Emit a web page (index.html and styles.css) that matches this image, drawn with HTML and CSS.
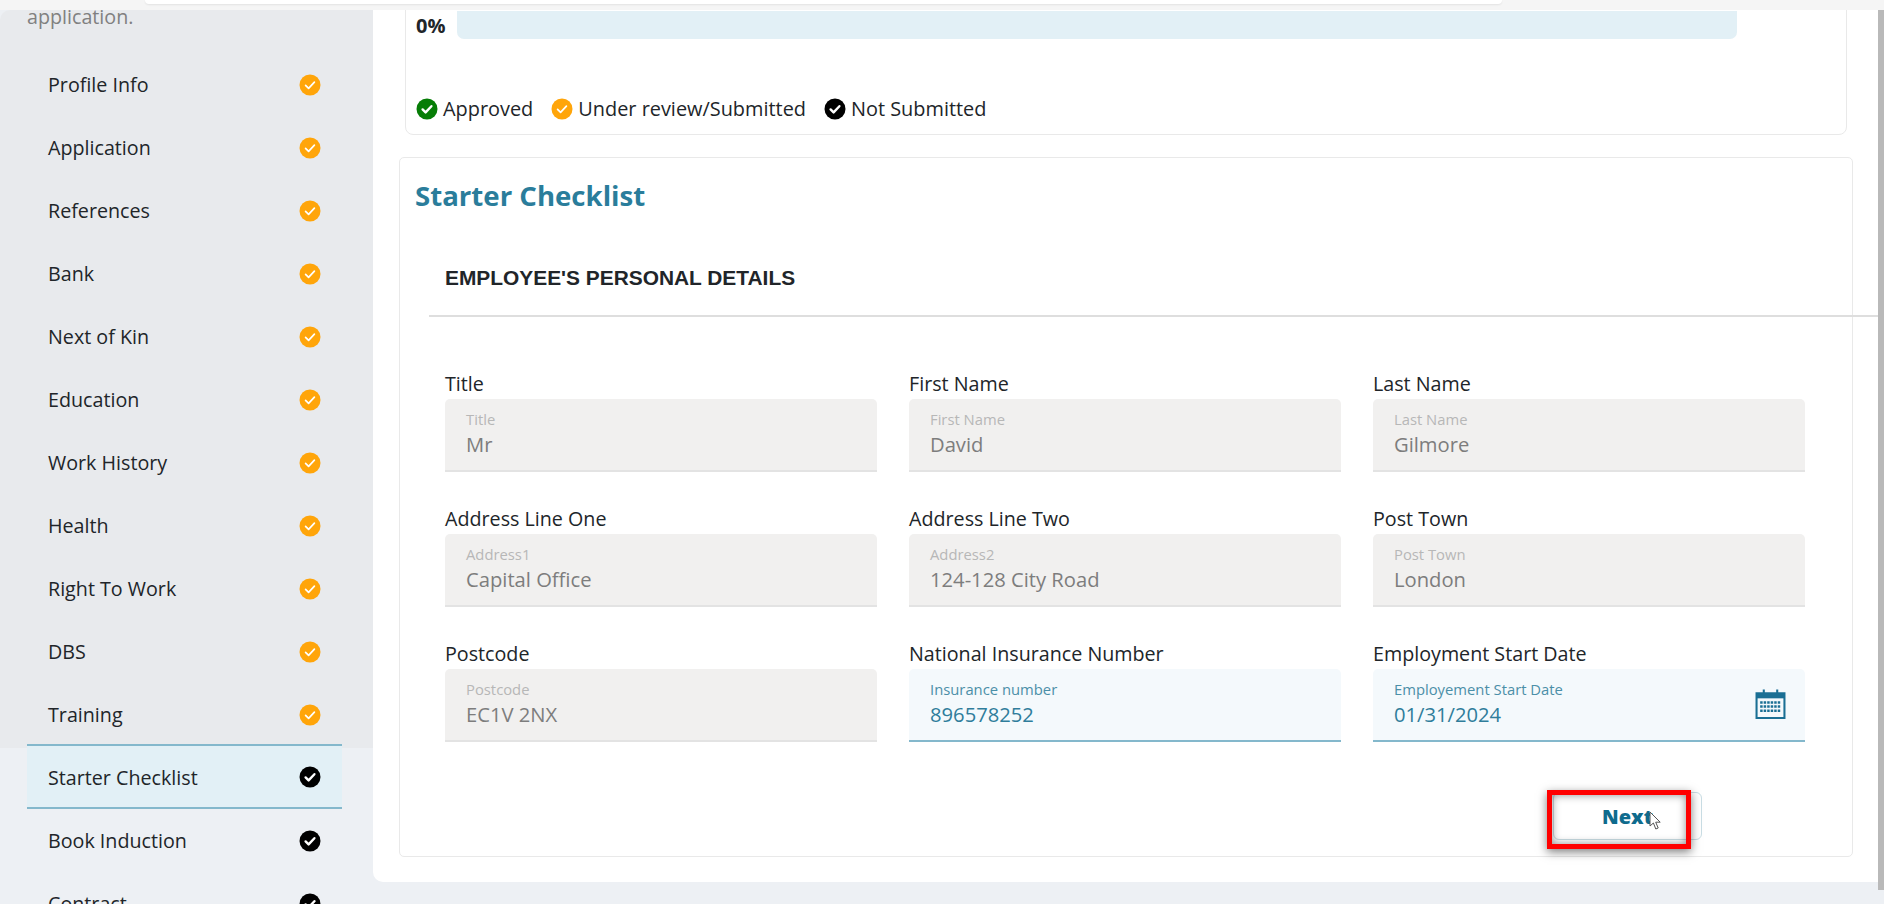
FILE: index.html
```html
<!DOCTYPE html>
<html lang="en">
<head>
    <meta charset="utf-8">
    <title>Starter Checklist</title>
    <link rel="stylesheet" href="styles.css">
</head>
<body>
    <svg class="defs" width="0" height="0">
        <symbol id="tick" viewBox="0 0 22 22">
            <circle cx="11" cy="11" r="10.5" fill="currentColor"/>
            <path d="M6.6 11.4l3 3 5.8-6.2" fill="none" stroke="#fff" stroke-width="1.7" stroke-linecap="round" stroke-linejoin="round"/>
        </symbol>
        <symbol id="tick-bold" viewBox="0 0 22 22">
            <circle cx="11" cy="11" r="10.5" fill="currentColor"/>
            <path d="M6.6 11.4l3 3 5.8-6.2" fill="none" stroke="#fff" stroke-width="2.4" stroke-linecap="round" stroke-linejoin="round"/>
        </symbol>
    </svg>

    <div class="topbar"><div class="topbar-search"></div></div>

    <div class="layout">
        <aside class="sidebar">
            <div class="sidebar-shade"></div>
            <p class="intro">application.</p>
            <ul class="steps">
                <li class="step">Profile Info<svg class="dot orange"><use href="#tick"/></svg></li>
                <li class="step">Application<svg class="dot orange"><use href="#tick"/></svg></li>
                <li class="step">References<svg class="dot orange"><use href="#tick"/></svg></li>
                <li class="step">Bank<svg class="dot orange"><use href="#tick"/></svg></li>
                <li class="step">Next of Kin<svg class="dot orange"><use href="#tick"/></svg></li>
                <li class="step">Education<svg class="dot orange"><use href="#tick"/></svg></li>
                <li class="step">Work History<svg class="dot orange"><use href="#tick"/></svg></li>
                <li class="step">Health<svg class="dot orange"><use href="#tick"/></svg></li>
                <li class="step">Right To Work<svg class="dot orange"><use href="#tick"/></svg></li>
                <li class="step">DBS<svg class="dot orange"><use href="#tick"/></svg></li>
                <li class="step">Training<svg class="dot orange"><use href="#tick"/></svg></li>
                <li class="step active">Starter Checklist<svg class="dot black"><use href="#tick-bold"/></svg></li>
                <li class="step">Book Induction<svg class="dot black"><use href="#tick-bold"/></svg></li>
                <li class="step">Contract<svg class="dot black"><use href="#tick-bold"/></svg></li>
            </ul>
        </aside>

        <main class="panel">
            <section class="progress-card">
                <div class="progress-row">
                    <b class="percent">0%</b>
                    <div class="progress-bar"></div>
                </div>
                <div class="legend">
                    <span class="legend-item"><svg class="dot green"><use href="#tick-bold"/></svg>Approved</span>
                    <span class="legend-item"><svg class="dot orange"><use href="#tick"/></svg>Under review/Submitted</span>
                    <span class="legend-item"><svg class="dot black"><use href="#tick-bold"/></svg>Not Submitted</span>
                </div>
            </section>

            <section class="checklist-card">
                <h2 class="card-title">Starter Checklist</h2>
                <h3 class="form-heading">EMPLOYEE'S PERSONAL DETAILS</h3>
                <div class="form-grid">
                    <div class="field">
                        <label>Title</label>
                        <div class="box"><small>Title</small><span>Mr</span></div>
                    </div>
                    <div class="field">
                        <label>First Name</label>
                        <div class="box"><small>First Name</small><span>David</span></div>
                    </div>
                    <div class="field">
                        <label>Last Name</label>
                        <div class="box"><small>Last Name</small><span>Gilmore</span></div>
                    </div>
                    <div class="field">
                        <label>Address Line One</label>
                        <div class="box"><small>Address1</small><span>Capital Office</span></div>
                    </div>
                    <div class="field">
                        <label>Address Line Two</label>
                        <div class="box"><small>Address2</small><span>124-128 City Road</span></div>
                    </div>
                    <div class="field">
                        <label>Post Town</label>
                        <div class="box"><small>Post Town</small><span>London</span></div>
                    </div>
                    <div class="field">
                        <label>Postcode</label>
                        <div class="box"><small>Postcode</small><span>EC1V 2NX</span></div>
                    </div>
                    <div class="field">
                        <label>National Insurance Number</label>
                        <div class="box editable"><small>Insurance number</small><span>896578252</span></div>
                    </div>
                    <div class="field">
                        <label>Employment Start Date</label>
                        <div class="box editable">
                            <small>Employement Start Date</small><span>01/31/2024</span>
                            <svg class="calendar" viewBox="0 0 30 30">
                                <path d="M1.5 5h27v24h-27z" fill="none" stroke="currentColor" stroke-width="2"/>
                                <path d="M1.5 5h27v5h-27z" fill="currentColor"/>
                                <path d="M8.5 1.5v6M21.5 1.5v6" stroke="currentColor" stroke-width="2"/>
                                <path d="M5 14h20M5 18h20M5 22h20" stroke="currentColor" stroke-width="2.4" stroke-dasharray="2.4 1"/>
                            </svg>
                        </div>
                    </div>
                </div>
                <div class="actions">
                    <button class="next-btn">Next</button>
                    <div class="highlight"></div>
                    <svg class="cursor" viewBox="0 0 12 20">
                        <path d="M1 1v14l3.4-3 2.4 6 2.4-1-2.5-5.8h4.5z" fill="#fff" stroke="#555" stroke-width="1"/>
                    </svg>
                </div>
            </section>
        </main>
    </div>

    <div class="scrollbar"></div>
</body>
</html>
```

FILE: styles.css
```css
html, body {
    height: 100%;
}
body {
    margin: 0;
    height: 904px;
    overflow: hidden;
    position: relative;
    background-color: #edf0f4;
    font-family: "Open Sans", "Noto Sans", sans-serif;
    font-size: 19.7px;
    color: #212529;
}
.defs {
    position: absolute;
}
.topbar {
    height: 10px;
    background: #f5f5f5;
}
.topbar-search {
    margin: 0 382px 0 145px;
    height: 4px;
    background: #fff;
    border-radius: 0 0 14px 14px;
    box-shadow: 0 1px 2px rgba(0, 0, 0, 0.08);
}
.layout {
    display: flex;
    height: 894px;
    overflow: hidden;
}

/* left steps */
.sidebar {
    width: 373px;
    flex: none;
    position: relative;
}
.sidebar-shade {
    position: absolute;
    top: 0;
    left: 0;
    right: 0;
    height: 738px;
    background: #e8eaed;
    border-top-left-radius: 10px;
    z-index: -1;
}
.intro {
    margin: 0 0 0 27px;
    height: 43px;
    line-height: 13px;
    color: #808080;
    overflow: hidden;
}
.steps {
    list-style: none;
    margin: 0 31px 0 27px;
    padding: 0;
}
.step {
    height: 63px;
    box-sizing: border-box;
    padding: 0 21px;
    display: flex;
    align-items: center;
    justify-content: space-between;
}
.step.active {
    margin-top: -2px;
    height: 65px;
    padding-top: 1px;
    background: #e2f0f6;
    border-top: 2px solid #84b8cc;
    border-bottom: 2px solid #84b8cc;
}
.dot {
    width: 22px;
    height: 22px;
    flex: none;
}
.orange { color: #ffa50a; }
.black { color: #000; }
.green { color: #067d06; }

/* right panel */
.panel {
    flex: 1;
    height: 872px;
    background: #fff;
    border-bottom-left-radius: 10px;
    padding: 0 0 0 26px;
    box-sizing: border-box;
}
.progress-card {
    margin: -14px 37px 0 6px;
    height: 139px;
    box-sizing: border-box;
    border: 1px solid #e9e9e9;
    border-radius: 8px;
    padding: 14px 10px 0 10px;
}
.progress-row {
    display: flex;
    align-items: center;
    gap: 11px;
    height: 28px;
}
.percent {
    font-size: 20px;
    font-weight: 700;
    width: 30px;
}
.progress-bar {
    width: 1280px;
    height: 28px;
    background: #e2f0f6;
    border-radius: 0 0 7px 7px;
}
.legend {
    display: flex;
    gap: 18px;
    margin-top: 56px;
    font-size: 19.9px;
}
.legend-item {
    display: flex;
    align-items: center;
    gap: 5px;
}
.checklist-card {
    margin: 22px 31px 0 0;
    height: 700px;
    box-sizing: border-box;
    border: 1px solid #e9e9e9;
    border-radius: 5px;
    position: relative;
}
.card-title {
    margin: 0;
    padding: 18px 0 0 15px;
    font-size: 27.6px;
    line-height: 38px;
    font-weight: 700;
    color: #2a7d9b;
}
.form-heading {
    margin: 53px -26px 0 29px;
    padding: 0 0 27px 16px;
    font-family: "Liberation Sans", Arial, sans-serif;
    font-size: 20.9px;
    line-height: 21px;
    color: #212529;
    border-bottom: 2px solid #dedede;
}
.form-grid {
    display: grid;
    grid-template-columns: 432px 432px 432px;
    column-gap: 32px;
    row-gap: 34px;
    margin: 54px 0 0 45px;
}
.field label {
    display: block;
    height: 28px;
    line-height: 25px;
}
.box {
    position: relative;
    height: 73px;
    box-sizing: border-box;
    padding: 10px 21px 0;
    background: #f1f0ef;
    border-bottom: 2px solid #e3e3e3;
    border-radius: 5px 5px 0 0;
    color: #7d7d7d;
}
.box small {
    display: block;
    font-size: 14.8px;
    line-height: 20px;
    color: #b7b7b7;
}
.box span {
    display: block;
    font-size: 20.2px;
    line-height: 30px;
}
.box.editable {
    background: #f4f9fc;
    border-bottom-color: #84b8cc;
    color: #2f7d9b;
}
.box.editable small {
    color: #4b8fa8;
}
.calendar {
    position: absolute;
    right: 19px;
    top: 19px;
    width: 31px;
    height: 31px;
    color: #1a6f94;
}
.actions {
    position: relative;
    display: flex;
    justify-content: flex-end;
    margin: 50px 150px 0 0;
}
.next-btn {
    width: 149px;
    height: 48px;
    padding: 0;
    background: #fff;
    border: 1px solid #c9dde4;
    border-radius: 6px;
    font-family: "Open Sans", sans-serif;
    font-size: 20px;
    font-weight: 800;
    color: #0f6b8d;
}
/* annotation drawn over the screenshot */
.highlight {
    position: absolute;
    right: 11px;
    top: -2px;
    width: 144px;
    height: 59px;
    box-sizing: border-box;
    border: 5px solid #f00;
    box-shadow: 0 3px 9px rgba(0, 0, 0, 0.5), inset 0 0 9px rgba(0, 0, 0, 0.45);
}
.cursor {
    position: absolute;
    right: 41px;
    top: 19px;
    width: 12px;
    height: 20px;
}
.scrollbar {
    position: absolute;
    top: 10px;
    right: 0;
    width: 6px;
    height: 880px;
    background: #b9b9b9;
}
```
